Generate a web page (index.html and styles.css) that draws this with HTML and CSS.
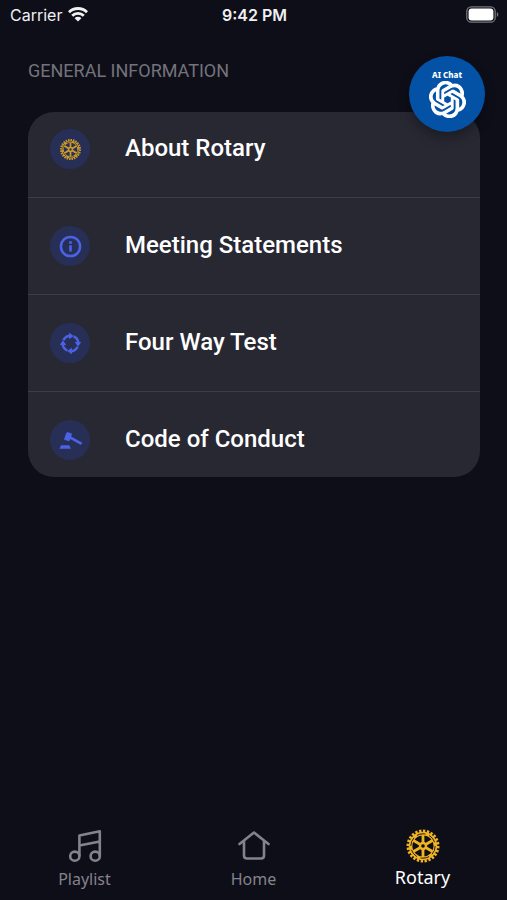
FILE: index.html
```html
<!DOCTYPE html>
<html lang="en">
<head>
<meta charset="utf-8">
<meta name="viewport" content="width=device-width, initial-scale=1">
<title>Rotary</title>
<link rel="stylesheet" href="styles.css">
</head>
<body>
<svg class="defs" aria-hidden="true">
  <symbol id="wheel" viewBox="0 0 36 36">
    <g fill="none" stroke="currentColor">
      <circle cx="18" cy="18" r="15" stroke-width="3" pathLength="96" stroke-dasharray="2.4 1.6"/>
      <circle cx="18" cy="18" r="12.4" stroke-width="3.600"/>
      <circle cx="18" cy="18" r="3" stroke-width="2.400"/>
      <path stroke-width="2.800" d="M18 14.500V6.500M18 21.500v8M21 16.250l7-4M15 19.750l-7 4M21 19.750l7 4M15 16.250l-7-4"/>
      <circle cx="18" cy="18" r="12.200" stroke="#201c1c" stroke-width="1" pathLength="60" stroke-dasharray="7 3"/>
    </g>
  </symbol>
</svg>
<div class="app">
  <header class="status">
    <div class="carrier">
      <span>Carrier</span>
      <svg class="wifi" viewBox="0 0 20 15" aria-hidden="true">
        <g fill="none" stroke="currentColor" stroke-width="2.800">
          <path d="M1 5.200a12.800 12.800 0 0 1 18 0"/>
          <path d="M4.200 8.700a8.200 8.200 0 0 1 11.600 0"/>
        </g>
        <path fill="currentColor" d="M6.600 11.200a4.800 4.800 0 0 1 6.800 0L10 14.600z"/>
      </svg>
    </div>
    <time class="clock">9:42 PM</time>
    <svg class="battery" viewBox="0 0 33 17" aria-hidden="true">
      <rect x=".8" y=".8" width="28.400" height="15.400" rx="4.500" fill="none" stroke="#77767d" stroke-width="1.300"/>
      <rect x="2.600" y="2.600" width="24.800" height="11.800" rx="3" fill="#fff"/>
      <path d="M30.800 6c2 .7 2 4.300 0 5z" fill="#77767d"/>
    </svg>
  </header>

  <main class="content">
    <h1 class="heading">GENERAL INFORMATION</h1>
    <ul class="card">
      <li class="item"><a class="row" href="#about">
        <span class="badge"><svg class="icon gold" aria-hidden="true"><use href="#wheel"/></svg></span>
        <span class="label">About Rotary</span>
      </a></li>
      <li class="item"><a class="row" href="#meeting">
        <span class="badge"><svg class="icon" viewBox="0 0 24 24" aria-hidden="true">
          <circle cx="12" cy="12" r="10" fill="none" stroke="currentColor" stroke-width="2.600"/>
          <path d="M10.600 10.800h2.800v6.400h-2.800zM10.600 6.500h2.800v2.600h-2.800z" fill="currentColor"/>
        </svg></span>
        <span class="label">Meeting Statements</span>
      </a></li>
      <li class="item"><a class="row" href="#test">
        <span class="badge"><svg class="icon" viewBox="0 0 24 24" aria-hidden="true">
          <g fill="none" stroke="currentColor" stroke-width="2.600">
            <path d="M4.600 8.600a8.200 8.200 0 0 1 6.400-4.700M15.400 4.600a8.200 8.200 0 0 1 4.700 6.400M19.400 15.400a8.200 8.200 0 0 1-6.400 4.700M8.600 19.400a8.200 8.200 0 0 1-4.700-6.400"/>
          </g>
          <path fill="currentColor" d="M10.500.8l5 3.300-5 3.500zM23.200 10.500l-3.300 5-3.500-5zM13.500 23.200l-5-3.300 5-3.500zM.8 13.500l3.300-5 3.500 5z"/>
        </svg></span>
        <span class="label">Four Way Test</span>
      </a></li>
      <li class="item"><a class="row" href="#conduct">
        <span class="badge"><svg class="icon" viewBox="0 0 24 24" aria-hidden="true">
          <path fill="currentColor" d="M.4 20.600l1.800-3.600h8.600l1.600 3.600zM8.400 3.200l5 1.600-.3 1.900-1.500 4.400-1.200 1.700-5-1.600.4-2 1.500-4.300z"/>
          <path d="M11.500 8.800l12 6.600" stroke="currentColor" stroke-width="2.800" fill="none"/>
        </svg></span>
        <span class="label">Code of Conduct</span>
      </a></li>
    </ul>
  </main>

  <button class="chat" type="button">
    <span>AI Chat</span>
    <svg class="chat-logo" viewBox="-.3 -.3 24.600 24.600" aria-hidden="true"><path d="M22.2819 9.8211a5.9847 5.9847 0 0 0-.5157-4.9108 6.0462 6.0462 0 0 0-6.5098-2.9A6.0651 6.0651 0 0 0 4.9807 4.1818a5.9847 5.9847 0 0 0-3.9977 2.9 6.0462 6.0462 0 0 0 .7427 7.0966 5.98 5.98 0 0 0 .511 4.9107 6.051 6.051 0 0 0 6.5146 2.9001A5.9847 5.9847 0 0 0 13.2599 24a6.0557 6.0557 0 0 0 5.7718-4.2058 5.9894 5.9894 0 0 0 3.9977-2.9001 6.0557 6.0557 0 0 0-.7475-7.0729zm-9.022 12.6081a4.4755 4.4755 0 0 1-2.8764-1.0408l.1419-.0804 4.7783-2.7582a.7948.7948 0 0 0 .3927-.6813v-6.7369l2.02 1.1686a.071.071 0 0 1 .038.052v5.5826a4.504 4.504 0 0 1-4.4945 4.4944zm-9.6607-4.1254a4.4708 4.4708 0 0 1-.5346-3.0137l.142.0852 4.783 2.7582a.7712.7712 0 0 0 .7806 0l5.8428-3.3685v2.3324a.0804.0804 0 0 1-.0332.0615L9.74 19.9502a4.4992 4.4992 0 0 1-6.1408-1.6464zM2.3408 7.8956a4.485 4.485 0 0 1 2.3655-1.9728V11.6a.7664.7664 0 0 0 .3879.6765l5.8144 3.3543-2.0201 1.1685a.0757.0757 0 0 1-.071 0l-4.8303-2.7865A4.504 4.504 0 0 1 2.3408 7.872zm16.5963 3.8558L13.1038 8.364 15.1192 7.2a.0757.0757 0 0 1 .071 0l4.8303 2.7913a4.4944 4.4944 0 0 1-.6765 8.1042v-5.6772a.79.79 0 0 0-.407-.667zm2.0107-3.0231l-.142-.0852-4.7735-2.7818a.7759.7759 0 0 0-.7854 0L9.409 9.2297V6.8974a.0662.0662 0 0 1 .0284-.0615l4.8303-2.7866a4.4992 4.4992 0 0 1 6.6802 4.66zM8.3065 12.863l-2.02-1.1638a.0804.0804 0 0 1-.038-.0567V6.0742a4.4992 4.4992 0 0 1 7.3757-3.4537l-.142.0805L8.704 5.459a.7948.7948 0 0 0-.3927.6813zm1.0976-2.3654l2.602-1.4998 2.6069 1.4998v2.9994l-2.5974 1.4997-2.6067-1.4997Z" fill="currentColor" stroke="currentColor" stroke-width=".8"/></svg>
  </button>

  <nav class="tabs">
    <a class="tab" href="#playlist">
      <svg class="tab-icon" viewBox="0 0 36 36" aria-hidden="true">
        <g fill="none" stroke="currentColor" stroke-width="2.600">
          <circle cx="7.800" cy="28.200" r="4.600"/>
          <circle cx="28.200" cy="28.200" r="4.600"/>
          <path d="M12.400 28.200V7.600l20.400-4.300v24.900M12.400 17.600l20.400-4.200" stroke-linejoin="round"/>
        </g>
      </svg>
      <span>Playlist</span>
    </a>
    <a class="tab" href="#home">
      <svg class="tab-icon" viewBox="0 0 36 36" aria-hidden="true">
        <path d="M3.500 16L18 4.500 32.500 16M8 13v14.500q0 3 3 3h14q3 0 3-3V13" fill="none" stroke="currentColor" stroke-width="2.600" stroke-linejoin="round" stroke-linecap="round"/>
      </svg>
      <span>Home</span>
    </a>
    <a class="tab active" href="#rotary" aria-current="page">
      <svg class="tab-icon gold" aria-hidden="true"><use href="#wheel"/></svg>
      <span>Rotary</span>
    </a>
  </nav>
</div>
</body>
</html>
```
FILE: styles.css
```css
* {
  box-sizing: border-box;
}

body {
  margin: 0;
  background: #0e0e19;
  color: #fff;
  font-family: "Noto Sans", sans-serif;
}

a {
  color: inherit;
  text-decoration: none;
}

.defs {
  position: absolute;
  width: 0;
  height: 0;
}

.app {
  position: relative;
  display: flex;
  flex-direction: column;
  min-height: 100vh;
}

.status {
  display: grid;
  grid-template-columns: 1fr auto 1fr;
  align-items: center;
  height: 29px;
  padding: 0 8px 0 10px;
  font-family: Inter, sans-serif;
  font-size: 16px;
  color: #f0f0f2;
}

.carrier {
  display: flex;
  align-items: center;
  gap: 6px;
}

.wifi {
  width: 20px;
  height: 15px;
}

.clock {
  font-weight: 600;
}

.battery {
  justify-self: end;
  width: 33px;
  height: 17px;
}

.content {
  flex: 1;
  padding: 29px 27px 0 28px;
}

.heading {
  margin: 0 0 28px;
  font-family: Roboto, sans-serif;
  font-size: 18px;
  font-weight: 400;
  line-height: 26px;
  color: #74737b;
}

.card {
  margin: 0;
  padding: 0;
  overflow: hidden;
  list-style: none;
  border-radius: 26px;
  background: #282833;
}

.item + .item {
  border-top: 1px solid #3d3d48;
}

.item:first-child {
  margin-top: -11px;
}

.item:last-child {
  margin-bottom: -11px;
}

.row {
  display: flex;
  align-items: center;
  gap: 35px;
  height: 96px;
  padding: 0 22px;
  font-family: Roboto, sans-serif;
  font-size: 24px;
  font-weight: 500;
}

.label {
  padding-bottom: 3px;
}

.badge {
  display: grid;
  place-items: center;
  width: 40px;
  height: 40px;
  border-radius: 50%;
  background: #272f57;
  color: #4b62e6;
}

.icon {
  width: 23px;
  height: 23px;
}

.badge .gold {
  color: #c99a2e;
}

.chat {
  position: absolute;
  top: 56px;
  right: 22px;
  display: flex;
  flex-direction: column;
  align-items: center;
  width: 76px;
  height: 76px;
  padding: 13px 0 0;
  border: 0;
  border-radius: 50%;
  background: #0452a6;
  box-shadow: 0 6px 12px rgba(0, 0, 0, 0.3);
  color: #fff;
  font: 800 8px/12px "Noto Sans", sans-serif;
}

.chat-logo {
  width: 37px;
  height: 37px;
}

.tabs {
  display: grid;
  grid-template-columns: repeat(3, 1fr);
  height: 72px;
}

.tab {
  display: flex;
  flex-direction: column;
  align-items: center;
  gap: 4px;
  font-size: 16px;
  line-height: 22px;
  color: #84838c;
}

.tab-icon {
  width: 36px;
  height: 36px;
}

.tab .gold {
  color: #f0b323;
}

.tab.active {
  font-size: 18px;
  line-height: 18px;
  color: #fff;
}
```
